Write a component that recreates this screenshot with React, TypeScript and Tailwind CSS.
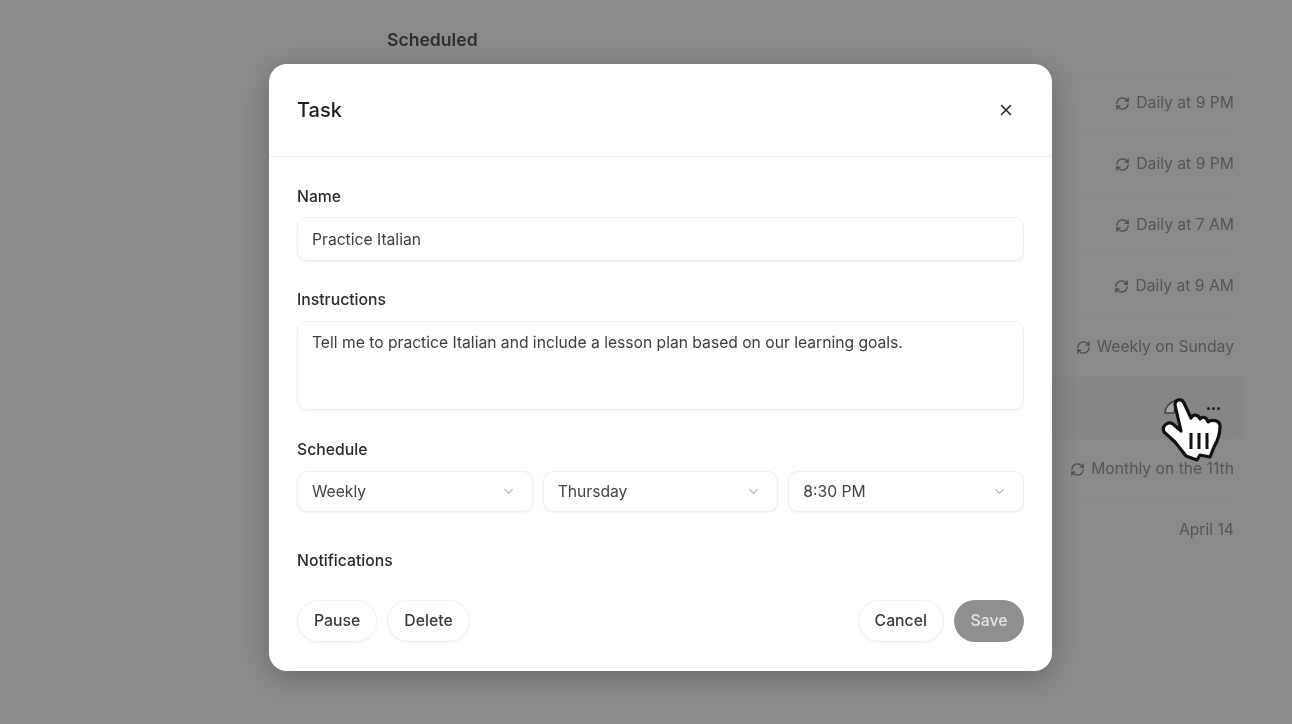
import { ChevronDown, RefreshCw, X } from 'lucide-react';

const rows = [
  { label: 'Daily at 9 PM', repeat: true },
  { label: 'Daily at 9 PM', repeat: true },
  { label: 'Daily at 7 AM', repeat: true },
  { label: 'Daily at 9 AM', repeat: true },
  { label: 'Weekly on Sunday', repeat: true },
  { label: '', repeat: false, hover: true },
  { label: 'Monthly on the 11th', repeat: true },
  { label: 'April 14', repeat: false },
];

function ScheduledList() {
  return (
    <div className="pl-[387px] pr-[58px] pt-[28px] blur-[0.6px]">
      <h1 className="h-[44px] text-[17.6px] leading-[23px] font-semibold text-[#2e2e2e]">Scheduled</h1>
      {rows.map((row, i) => (
        <div
          key={i}
          className={`flex h-[61px] items-center justify-end gap-[6px] border-t text-[15.7px] text-[#555] ${
            row.hover ? '-mr-[10px] border-transparent bg-[#868686] pr-[10px]' : 'border-[#868686]'
          }`}
        >
          {row.repeat && <RefreshCw size={15} strokeWidth={2} className="text-[#4a4a4a]" />}
          {row.label}
          {row.hover && (
            <span className="mr-[14px] flex gap-[2px]">
              <span className="size-[3px] rounded-full bg-[#222]" />
              <span className="size-[3px] rounded-full bg-[#222]" />
              <span className="size-[3px] rounded-full bg-[#222]" />
            </span>
          )}
        </div>
      ))}
    </div>
  );
}

function Select({ value }: { value: string }) {
  return (
    <div className="flex h-[41px] flex-1 items-center justify-between rounded-[10px] border border-[#f0f0f0] bg-white pl-[14px] pr-[16px] text-[15.65px] text-[#444] shadow-[0_1px_2px_rgba(0,0,0,0.05)]">
      {value}
      <ChevronDown size={15} strokeWidth={2} className="text-[#b5b5b5]" />
    </div>
  );
}

function PillButton({ label }: { label: string }) {
  return (
    <button className="h-[42px] rounded-full border border-[#f2f2f2] bg-white px-[16px] text-[15.8px] font-medium text-[#3a3a3a] shadow-[0_1px_2px_rgba(0,0,0,0.04)]">
      {label}
    </button>
  );
}

function TaskDialog() {
  return (
    <div className="absolute left-[269px] top-[64px] w-[783px] rounded-[18px] bg-white shadow-[0_6px_26px_rgba(0,0,0,0.24)] blur-[0.4px]">
      <div className="flex h-[93px] items-center justify-between border-b border-[#f1f1f1] pl-[28px] pr-[37px]">
        <h2 className="text-[20px] font-medium text-[#1c1c1c]">Task</h2>
        <X size={18} strokeWidth={2} className="text-[#222]" />
      </div>

      <div className="px-[28px] pb-[29px] pt-[30px]">
        <label className="block text-[15.75px] leading-[20px] font-medium text-[#2b2b2b]">Name</label>
        <div className="mt-[10px] flex h-[44px] items-center rounded-[10px] border border-[#f0f0f0] pl-[14px] pt-[1px] text-[15.65px] text-[#3d3d3d] shadow-[0_1px_2px_rgba(0,0,0,0.05)]">
          Practice Italian
        </div>

        <label className="mt-[29px] block text-[15.75px] leading-[20px] font-medium text-[#2b2b2b]">Instructions</label>
        <div className="mt-[11px] h-[89px] rounded-[10px] border border-[#f0f0f0] pl-[14px] pt-[11px] text-[15.65px] leading-[20px] text-[#3d3d3d] shadow-[0_1px_2px_rgba(0,0,0,0.05)]">
          Tell me to practice Italian and include a lesson plan based on our learning goals.
        </div>

        <label className="mt-[30px] block text-[15.75px] leading-[20px] font-medium text-[#2b2b2b]">Schedule</label>
        <div className="mt-[11px] flex gap-[10px]">
          <Select value="Weekly" />
          <Select value="Thursday" />
          <Select value="8:30 PM" />
        </div>

        <label className="mt-[39px] block text-[15.75px] leading-[20px] font-medium text-[#2b2b2b]">Notifications</label>

        <div className="mt-[29px] flex items-center justify-between">
          <div className="flex gap-[10px]">
            <PillButton label="Pause" />
            <PillButton label="Delete" />
          </div>
          <div className="flex gap-[10px]">
            <PillButton label="Cancel" />
            <button className="h-[42px] w-[70px] rounded-full bg-[#8f8f8f] text-[15.8px] font-medium text-[#e4e4e4]">
              Save
            </button>
          </div>
        </div>
      </div>
    </div>
  );
}

function HandCursor() {
  return (
    <svg className="absolute left-[1150px] top-[385px] blur-[0.4px]" width="90" height="90" viewBox="0 0 90 90">
      <path d="M15 28C15 22 19 18 26 15L24 28Z" fill="#a8a8a8" stroke="#444" strokeWidth="1.5" />
      <path
        d="M25 20C25 14 32 13 34 18L41 33C43 29 48 29 50 34C52 31 57 32 58 37C61 34 70 35 70 41C70 50 67 57 64 62L60 72L50 70L47 75L36 71L25 57L14 47C11 41 18 36 23 39L31 46Z"
        fill="#fff"
        stroke="#111"
        strokeWidth="3.2"
        strokeLinejoin="round"
      />
      <path d="M41 48V64M49 48V64M57 48V64" stroke="#111" strokeWidth="3" />
    </svg>
  );
}

export default function App() {
  return (
    <div className="relative h-[724px] w-full overflow-hidden bg-[#8a8a8a] font-['Inter',sans-serif]">
      <ScheduledList />
      <TaskDialog />
      <HandCursor />
    </div>
  );
}
